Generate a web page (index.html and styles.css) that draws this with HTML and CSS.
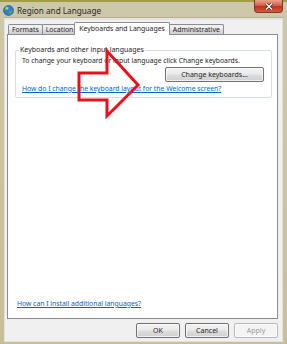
FILE: index.html
```html
<!DOCTYPE html>
<html>
<head>
<meta charset="utf-8">
<link rel="stylesheet" href="styles.css">
</head>
<body>
<div class="window">
  <div class="titlebar">
    <svg class="appicon" width="11" height="11" viewBox="0 0 11 11">
      <circle cx="5.5" cy="5.5" r="5" fill="#2f7fd0" stroke="#1d4f8a" stroke-width="0.6"/>
      <path d="M2 3.5 Q3.5 2 5 3 L4.5 5 L3 5.5 L2.2 4.8 Z" fill="#5fae3c"/>
      <path d="M6 6 L8.5 5.5 L9 7.5 L7 9.2 L6.2 8 Z" fill="#5fae3c"/>
      <circle cx="4" cy="3" r="1.6" fill="#ffffff" opacity="0.45"/>
    </svg>
    <span class="title">Region and Language</span>
    <div class="close">
      <svg width="8" height="7" viewBox="0 0 8 7">
        <path d="M1 0.5 L7 6.5 M7 0.5 L1 6.5" stroke="#3b2a24" stroke-width="2.6"/>
        <path d="M1 0.5 L7 6.5 M7 0.5 L1 6.5" stroke="#ffffff" stroke-width="1.3"/>
      </svg>
    </div>
  </div>
  <div class="client">
    <div class="tabs">
      <div class="tab t1">Formats</div>
      <div class="tab t2">Location</div>
      <div class="tab active">Keyboards and Languages</div>
      <div class="tab t4">Administrative</div>
    </div>
    <div class="panel">
      <fieldset class="group">
        <legend>Keyboards and other input languages</legend>
        <p class="info">To change your keyboard or input language click Change keyboards.</p>
        <div class="btnrow">
          <button class="btn wide">Change keyboards...</button>
        </div>
        <a class="link">How do I change the keyboard layout for the Welcome screen?</a>
      </fieldset>
      <div class="spacer"></div>
      <a class="link bottomlink">How can I install additional languages?</a>
    </div>
    <div class="actions">
      <button class="btn">OK</button>
      <button class="btn">Cancel</button>
      <button class="btn disabled">Apply</button>
    </div>
  </div>
  <svg class="arrow" width="287" height="344" viewBox="0 0 287 344">
    <polygon points="79,71 107,71 107,49 138,83 107,114 107,98 79,98" fill="none" stroke="#e5121c" stroke-width="3" stroke-linejoin="miter"/>
  </svg>
</div>
</body>
</html>
```
FILE: styles.css
```css
html, body {
  margin: 0;
  padding: 0;
}
body {
  width: 287px;
  height: 344px;
  overflow: hidden;
  font-family: "Noto Sans", "Open Sans", sans-serif;
  font-size: 6.8px;
  color: #1e1e1e;
}
.window {
  position: relative;
  width: 287px;
  height: 344px;
  box-sizing: border-box;
  display: flex;
  flex-direction: column;
  background: linear-gradient(#cdc8aa, #c5bf9c);
  border-top: 2px solid #a29e47;
  padding: 0 4px 2px 4px;
}
.titlebar {
  height: 15px;
  display: flex;
  align-items: center;
  position: relative;
  border-bottom: 1px solid #b3af98;
}
.appicon {
  margin-left: -1px;
  margin-right: 3px;
  margin-top: 1px;
}
.title {
  font-size: 8.2px;
  color: #262626;
  margin-top: 1px;
}
.close {
  position: absolute;
  right: 0;
  top: -2px;
  width: 29px;
  height: 13px;
  box-sizing: border-box;
  border: 1px solid #7a3a2a;
  border-top: none;
  border-radius: 0 0 4px 4px;
  background: linear-gradient(#e8a48e 0%, #d5614a 45%, #c1311c 55%, #d6583a 100%);
  display: flex;
  align-items: center;
  justify-content: center;
}
.client {
  flex: 1;
  display: flex;
  flex-direction: column;
  background: #f0f0f0;
  border: 1px solid #e2e2dc;
  border-top: 2px solid #e4e4e4;
  padding-top: 2px;
}
.tabs {
  display: flex;
  align-items: flex-end;
  padding-left: 3px;
  height: 12px;
  position: relative;
  z-index: 2;
}
.tab {
  height: 10px;
  line-height: 10px;
  box-sizing: border-box;
  padding: 0 3px;
  border: 1px solid #898c95;
  border-bottom: none;
  border-radius: 2px 2px 0 0;
  background: linear-gradient(#f2f2f2, #ebebeb 45%, #dddddd 55%, #cfcfcf);
  font-size: 6.9px;
  white-space: nowrap;
  margin-right: -1px;
}
.tab.active {
  height: 13px;
  line-height: 11px;
  background: #ffffff;
  margin: 0 -1px -1px -2px;
  padding: 0 4px;
  position: relative;
  z-index: 3;
}
.panel {
  flex: 1;
  display: flex;
  flex-direction: column;
  background: #ffffff;
  border: 1px solid #898c95;
  margin: 0 4px 0 2px;
  padding: 0 5px 9px 7px;
}
.group {
  margin: 10px 0 0 0;
  padding: 0 7px 3px 6px;
  border: 1px solid #d5dfe5;
  border-radius: 2px;
  min-width: 0;
}
.group legend {
  padding: 0 1px;
  margin-left: -3px;
  font-size: 7px;
  line-height: 10px;
}
.info {
  margin: 1px 0 0 0;
  line-height: 10px;
  white-space: nowrap;
}
.btnrow {
  display: flex;
  justify-content: flex-end;
  margin-top: 1px;
}
.btn {
  font-family: "Noto Sans", "Open Sans", sans-serif;
  font-size: 7px;
  color: #1e1e1e;
  height: 15px;
  width: 44px;
  padding: 0;
  border: 1px solid #707070;
  border-radius: 2px;
  background: linear-gradient(#f2f2f2, #ebebeb 45%, #dddddd 55%, #cfcfcf);
  box-shadow: inset 0 0 0 1px rgba(255,255,255,0.7);
}
.btn.wide {
  width: 99px;
}
.btn.disabled {
  color: #9a9a9a;
  border-color: #b5b8ba;
  background: #f4f4f4;
}
.link {
  display: block;
  color: #0066cc;
  text-decoration: underline;
  line-height: 10px;
  white-space: nowrap;
  margin-top: 2px;
}
.spacer {
  flex: 1;
}
.bottomlink {
  margin-left: 2px;
}
.actions {
  display: flex;
  justify-content: flex-end;
  gap: 5px;
  padding: 4px 4px 3px 0;
}
.arrow {
  position: absolute;
  left: 0;
  top: 0;
  pointer-events: none;
}
```
